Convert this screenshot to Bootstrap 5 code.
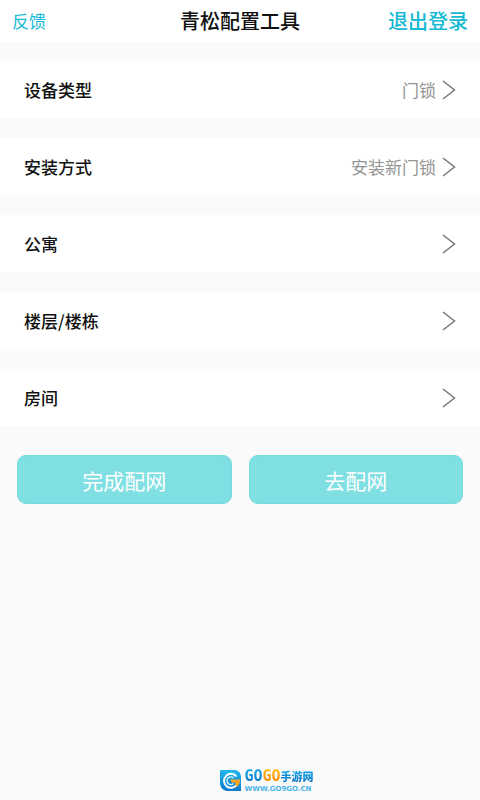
<!DOCTYPE html>
<html lang="zh-CN">
<head>
<meta charset="utf-8">
<meta name="viewport" content="width=device-width, initial-scale=1">
<title>青松配置工具</title>
<link href="https://cdn.jsdelivr.net/npm/bootstrap@5.3.0/dist/css/bootstrap.min.css" rel="stylesheet">
<style>
  body { font-family: "Noto Sans CJK SC", sans-serif; background: #fafafa; color: #111; }
  .top-bar { height: 42px; padding: 0 12px; }
  .top-bar > * { flex: 1 1 0; }
  .top-bar a { color: #14b9d3; }
  .feedback { font-size: 17px; }
  .logout, .top-title { font-size: 20px; line-height: 28px; }
  .top-bar .top-title { flex: 0 0 auto; font-weight: 500; }
  .logout { font-weight: 500; }
  .settings { gap: 20px; padding: 19px 0 29px; }
  .setting { height: 57px; padding: 0 24px; font-size: 17px; color: #111; border: 0; }
  .setting-name { font-weight: 500; }
  .setting-end { gap: 6px; }
  .setting-value { color: #949494; }
  .setting svg { width: 14px; height: 20px; }
  .actions { gap: 17px; padding: 0 17px; }
  .btn-teal { --bs-btn-color: #fff; --bs-btn-bg: #80dfe2; --bs-btn-border-color: #74dbde;
    --bs-btn-hover-color: #fff; --bs-btn-hover-bg: #6fd5d9; --bs-btn-hover-border-color: #6fd5d9;
    height: 49px; font-size: 21px; line-height: 28px; border-radius: 9px; }
  .site { gap: 2px; padding-bottom: 7px; padding-left: 54px; }
  .site-mark { width: 22px; height: 22px; }
  .site-name { font: 700 15px/17px "DejaVu Sans Mono", monospace; }
  .site-name span { background: linear-gradient(#18b0ee, #0868c0); -webkit-background-clip: text; background-clip: text; color: transparent; }
  .site-name .orange { background-image: linear-gradient(#ffbe10, #f57c00); }
  .site-name .cjk { font: 900 11px/17px "Noto Sans CJK SC", sans-serif; }
  .site-url { font: 700 7px/8px "DejaVu Sans", sans-serif; color: #4eb4e6; }
</style>
</head>
<body class="min-vh-100 d-flex flex-column">
<header class="top-bar bg-white d-flex align-items-center">
  <div><a class="feedback text-decoration-none" href="#feedback">反馈</a></div>
  <h1 class="top-title m-0">青松配置工具</h1>
  <div class="text-end"><a class="logout text-decoration-none" href="#logout">退出登录</a></div>
</header>
<main>
  <div class="settings d-flex flex-column">
    <button type="button" class="setting bg-white w-100 d-flex align-items-center justify-content-between">
      <span class="setting-name">设备类型</span>
      <span class="setting-end d-flex align-items-center"><span class="setting-value">门锁</span><svg viewBox="0 0 14 20" fill="none" stroke="#777" stroke-width="1.5" aria-hidden="true"><path d="M1 1 12.500 10 1 19"/></svg></span>
    </button>
    <button type="button" class="setting bg-white w-100 d-flex align-items-center justify-content-between">
      <span class="setting-name">安装方式</span>
      <span class="setting-end d-flex align-items-center"><span class="setting-value">安装新门锁</span><svg viewBox="0 0 14 20" fill="none" stroke="#777" stroke-width="1.5" aria-hidden="true"><path d="M1 1 12.500 10 1 19"/></svg></span>
    </button>
    <button type="button" class="setting bg-white w-100 d-flex align-items-center justify-content-between">
      <span class="setting-name">公寓</span>
      <svg viewBox="0 0 14 20" fill="none" stroke="#777" stroke-width="1.5" aria-hidden="true"><path d="M1 1 12.500 10 1 19"/></svg>
    </button>
    <button type="button" class="setting bg-white w-100 d-flex align-items-center justify-content-between">
      <span class="setting-name">楼层/楼栋</span>
      <svg viewBox="0 0 14 20" fill="none" stroke="#777" stroke-width="1.5" aria-hidden="true"><path d="M1 1 12.500 10 1 19"/></svg>
    </button>
    <button type="button" class="setting bg-white w-100 d-flex align-items-center justify-content-between">
      <span class="setting-name">房间</span>
      <svg viewBox="0 0 14 20" fill="none" stroke="#777" stroke-width="1.5" aria-hidden="true"><path d="M1 1 12.500 10 1 19"/></svg>
    </button>
  </div>
  <div class="actions d-flex">
    <button type="button" class="btn btn-teal flex-fill w-50">完成配网</button>
    <button type="button" class="btn btn-teal flex-fill w-50">去配网</button>
  </div>
</main>
<footer class="site mt-auto d-flex align-items-center justify-content-center">
  <svg class="site-mark" viewBox="0 0 22 22" aria-hidden="true">
    <defs><linearGradient id="markBlue" x2="0" y2="1"><stop stop-color="#22b8ef"/><stop offset="1" stop-color="#0b78cc"/></linearGradient></defs>
    <path d="M1 0H15Q21 1 21 7V21H7Q1 20 0 14V1Q0 0 1 0Z" fill="url(#markBlue)"/>
    <path d="M16.500 6.500A7 7 0 1 0 17 14.500" fill="none" stroke="#fff" stroke-width="2"/>
    <path d="M13.500 8A3.800 3.800 0 1 0 13.500 13.500" fill="none" stroke="#d9f3ff" stroke-width="1.500"/>
    <path d="M10 9.500H20Q20 14 17 17L15 14.500 16 12.500H12Z" fill="#ffa51d"/>
  </svg>
  <div>
    <div class="site-name d-flex"><span>GO</span><span class="orange">GO</span><span class="cjk">手游网</span></div>
    <div class="site-url">WWW.GO9GO.CN</div>
  </div>
</footer>
<script src="https://cdn.jsdelivr.net/npm/bootstrap@5.3.0/dist/js/bootstrap.bundle.min.js"></script>
</body>
</html>
